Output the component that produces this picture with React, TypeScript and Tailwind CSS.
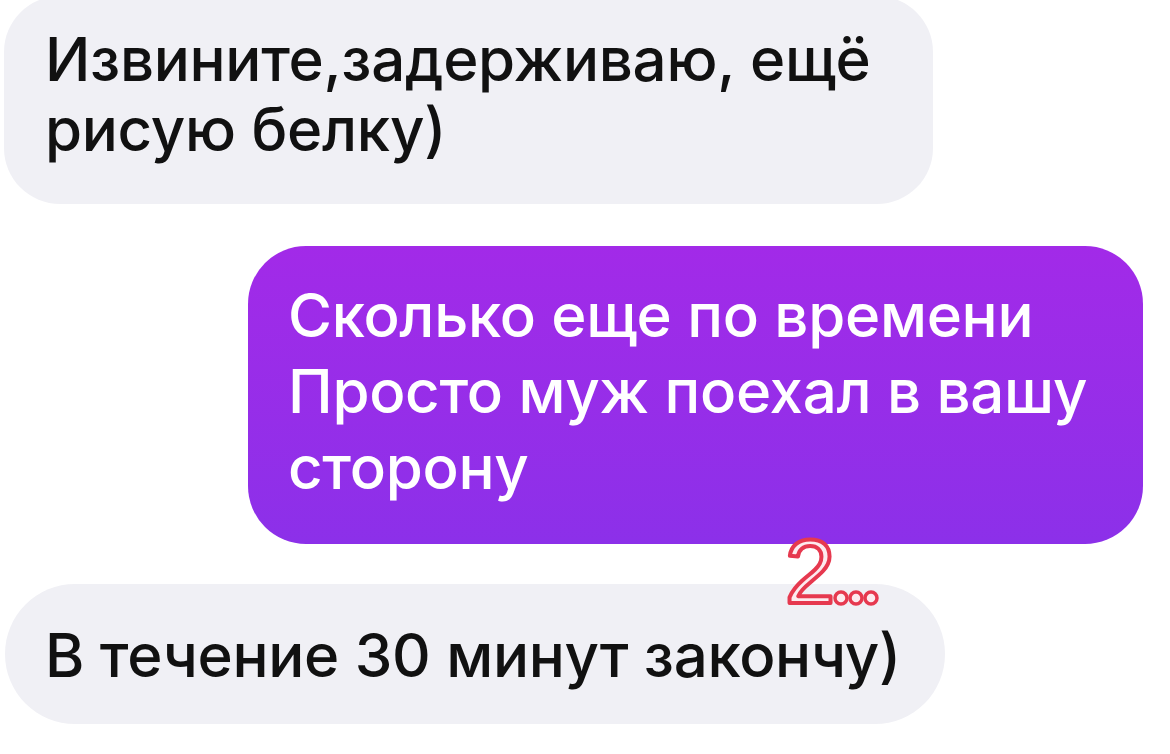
import React from "react";

function Sticker() {
  return (
    <svg
      className="absolute left-[772px] top-[506px]"
      width="120"
      height="110"
      viewBox="0 0 120 110"
    >
      <text
        x="13"
        y="97"
        fontFamily="Liberation Sans, Arial, sans-serif"
        fontSize="90"
        fill="#fdebef"
        stroke="#e6394f"
        strokeWidth="4"
        strokeLinejoin="round"
      >
        2
      </text>
      {[69, 84, 99].map((cx) => (
        <circle key={cx} cx={cx} cy={92} r={6} fill="#fdebef" stroke="#e6394f" strokeWidth="3.5" />
      ))}
    </svg>
  );
}

export default function App() {
  return (
    <div className="relative w-[1170px] h-[754px] overflow-hidden bg-white font-['Inter','Liberation_Sans',Arial,sans-serif] font-medium text-[60px] leading-[70px] tracking-[-0.3px]">
      <div className="flex flex-col">
        {/* incoming */}
        <div className="ml-[4px] mt-[-4px] w-[929px] rounded-[56px] bg-[#f0f0f5] pl-[41px] pt-[28px] pb-[40px] text-[#111]">
          Извините,задерживаю, ещё
          <br />
          рисую белку)
        </div>

        {/* outgoing */}
        <div className="ml-[248px] mt-[42px] w-[895px] h-[298px] rounded-[58px] bg-gradient-to-b from-[#a22ae8] to-[#8c30e9] pl-[40px] pt-[31px] leading-[76px] text-white">
          Сколько еще по времени
          <br />
          Просто муж поехал в вашу
          <br />
          сторону
        </div>

        {/* incoming */}
        <div className="ml-[5px] mt-[40px] w-[940px] h-[140px] rounded-[70px] bg-[#f0f0f5] pl-[40px] pt-[36px] text-[#111]">
          В течение 30 минут закончу)
        </div>
      </div>
      <Sticker />
    </div>
  );
}
